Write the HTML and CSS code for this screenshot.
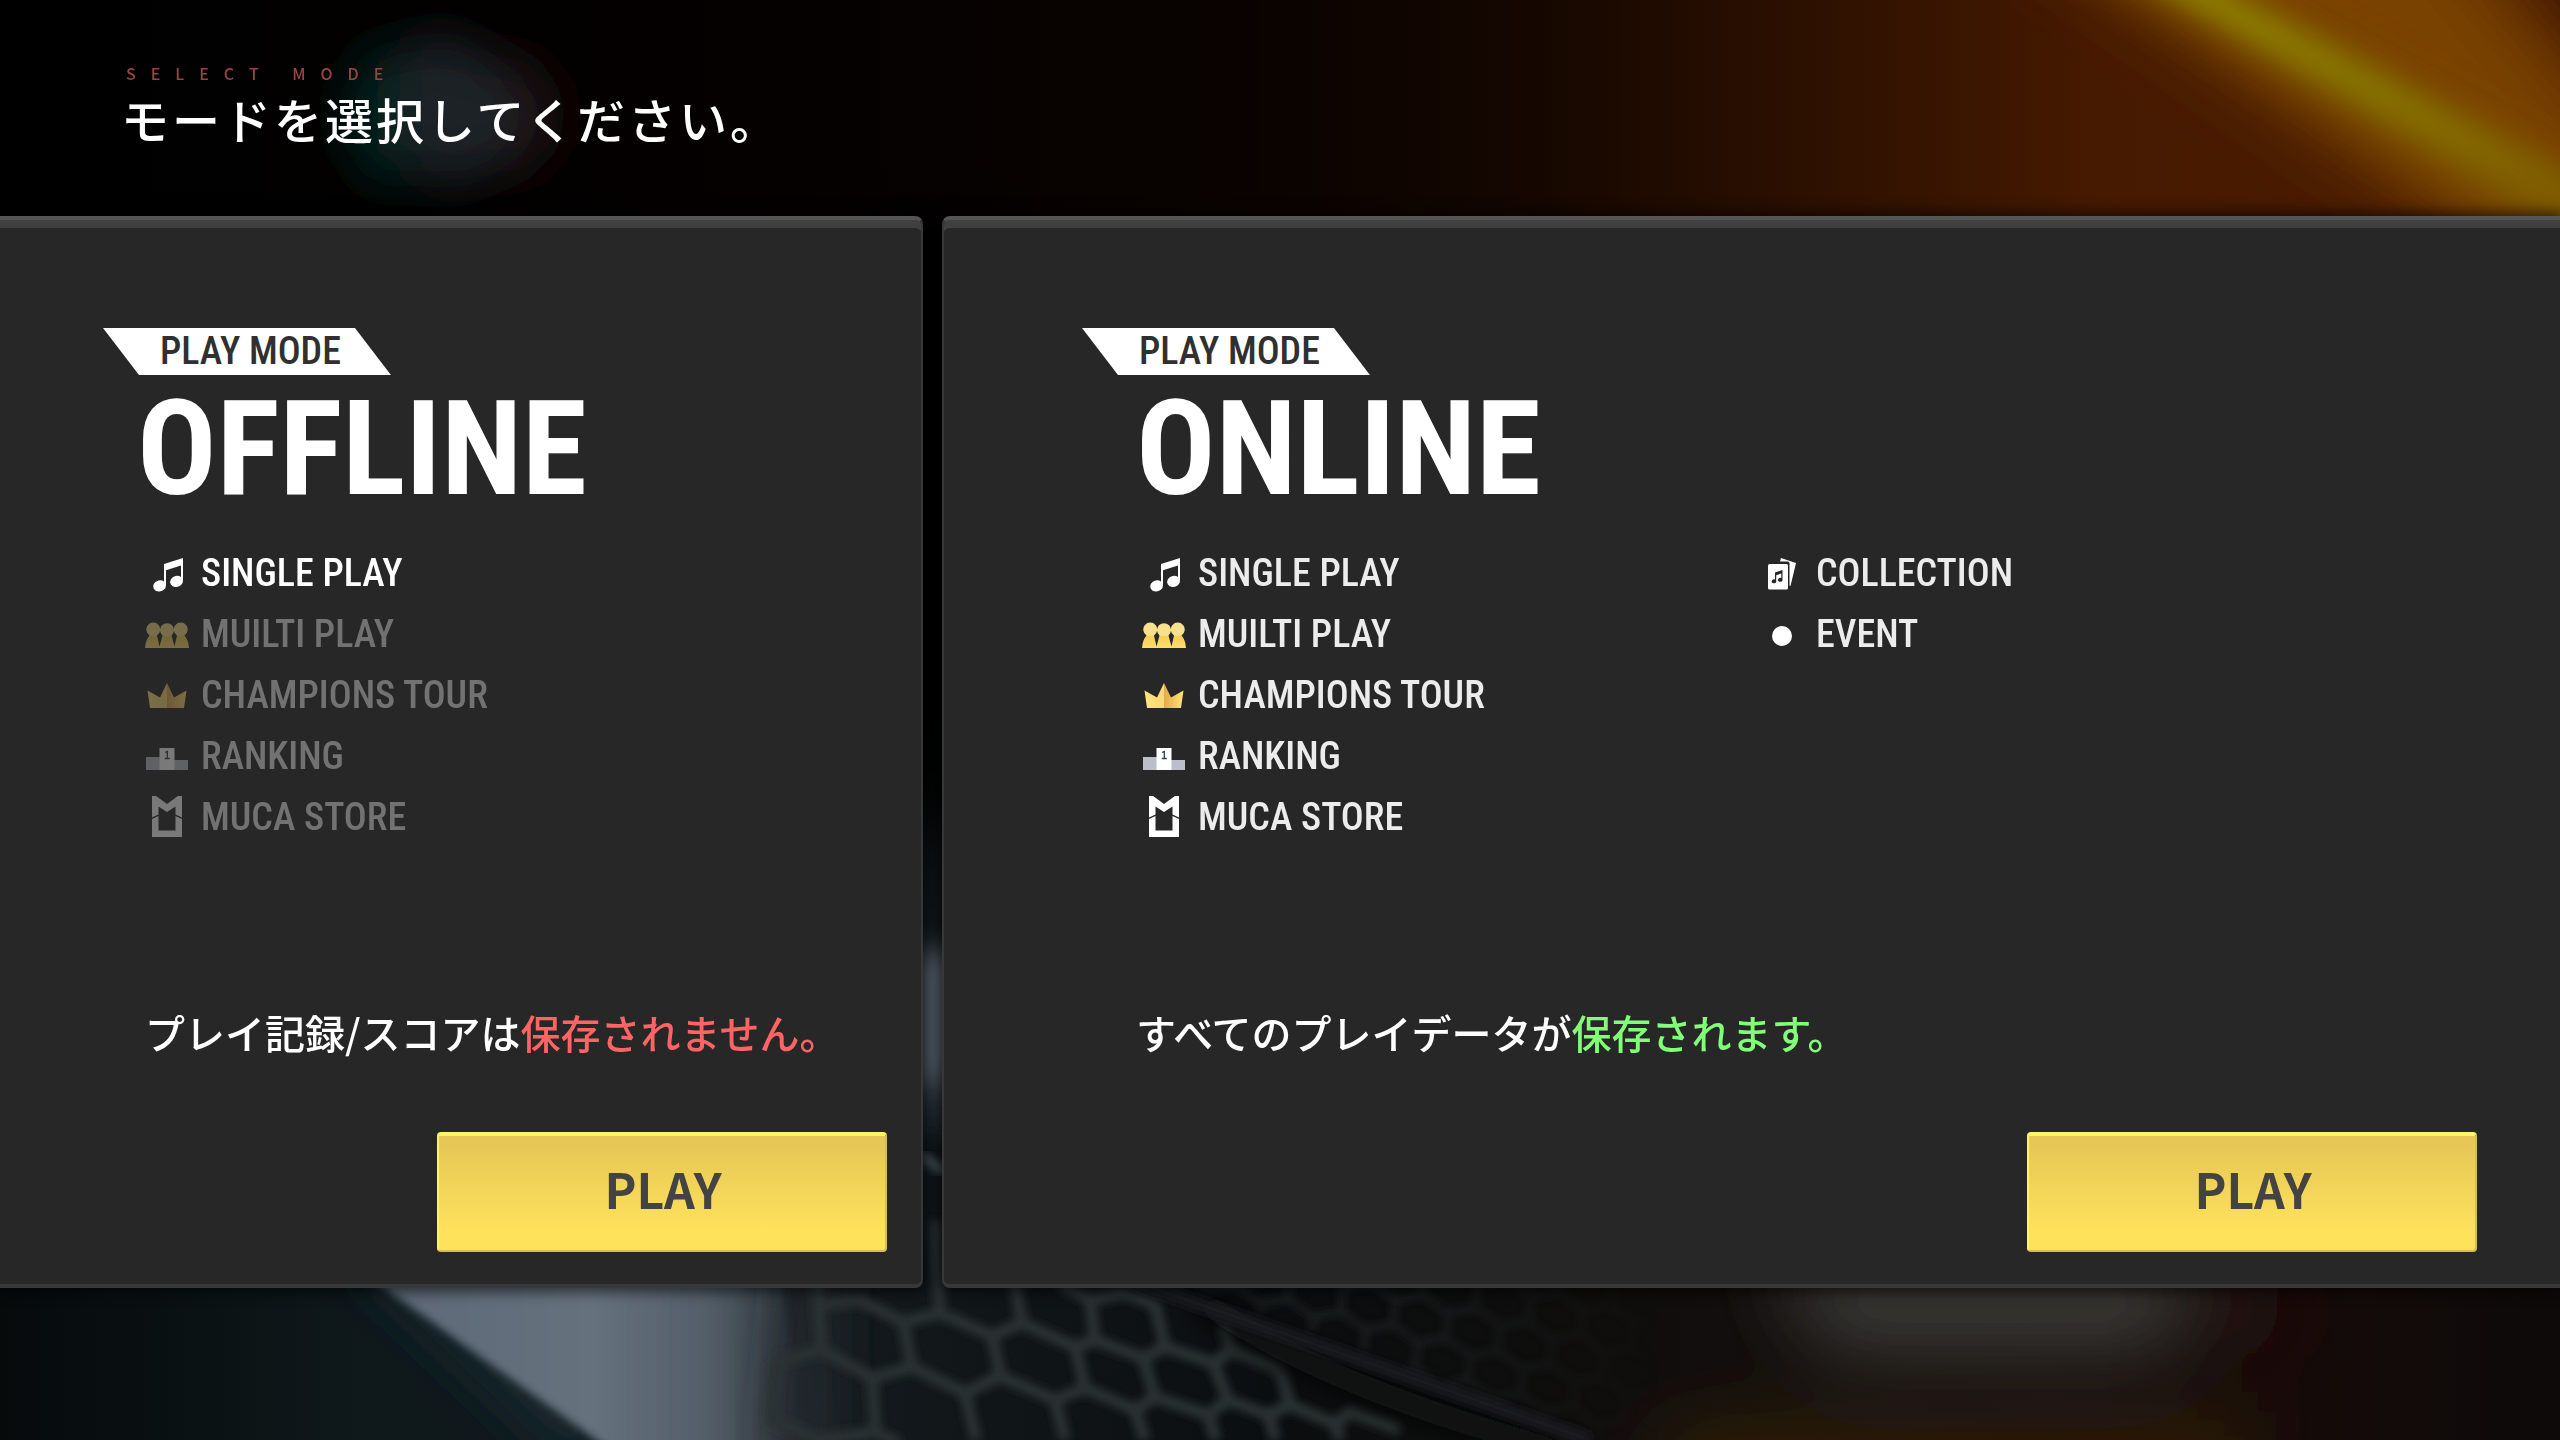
FILE: index.html
```
<!DOCTYPE html>
<html lang="ja">
<head>
<meta charset="utf-8">
<title>SELECT MODE</title>
<link rel="stylesheet" href="styles.css">
</head>
<body>
<svg class="backdrop" viewBox="0 0 2560 1440" preserveAspectRatio="xMidYMid slice" aria-hidden="true">
  <defs>
    <filter id="soft4" x="-20%" y="-20%" width="140%" height="140%"><feGaussianBlur stdDeviation="4"/></filter>
    <filter id="soft14" x="-50%" y="-50%" width="200%" height="200%"><feGaussianBlur stdDeviation="14"/></filter>
    <filter id="soft24" x="-50%" y="-50%" width="200%" height="200%"><feGaussianBlur stdDeviation="24"/></filter>
    <filter id="soft40" x="-50%" y="-50%" width="200%" height="200%"><feGaussianBlur stdDeviation="40"/></filter>
    <linearGradient id="amber" x1="0" x2="1" y1="0" y2="0">
      <stop offset="0" stop-color="#000"/><stop offset=".3" stop-color="#040100"/><stop offset=".5" stop-color="#0a0300"/><stop offset=".6" stop-color="#150700"/>
      <stop offset=".68" stop-color="#270e00"/><stop offset=".82" stop-color="#461a00"/><stop offset="1" stop-color="#4a1c00"/>
    </linearGradient>
    <linearGradient id="floor" x1="0" x2="1" y1="0" y2="0">
      <stop offset="0" stop-color="#060a0b"/><stop offset=".15" stop-color="#0f191c"/><stop offset=".35" stop-color="#12181b"/>
      <stop offset=".5" stop-color="#0b0e0f"/><stop offset=".7" stop-color="#120e0c"/><stop offset=".9" stop-color="#150b09"/><stop offset="1" stop-color="#0d0a0a"/>
    </linearGradient>
    <linearGradient id="streak" x1="2170" y1="0" x2="2560" y2="210" gradientUnits="userSpaceOnUse">
      <stop offset="0" stop-color="#938800"/><stop offset=".5" stop-color="#867404"/><stop offset="1" stop-color="#7f5c04"/>
    </linearGradient>
    <linearGradient id="sheen" x1="0" x2="1" y1="0" y2="0">
      <stop offset="0" stop-color="#5c6876"/><stop offset=".55" stop-color="#66717e"/><stop offset=".8" stop-color="#535e68"/><stop offset="1" stop-color="#2e373d"/>
    </linearGradient>
    <linearGradient id="fade" x1="1170" x2="1660" y1="0" y2="0" gradientUnits="userSpaceOnUse">
      <stop offset="0" stop-color="#fff"/><stop offset=".5" stop-color="#aaa"/><stop offset="1" stop-color="#000"/>
    </linearGradient>
    <mask id="meshFade"><rect x="1100" y="1260" width="600" height="200" fill="url(#fade)"/></mask>
    <pattern id="mesh" width="54" height="72" patternUnits="userSpaceOnUse" patternTransform="rotate(14) skewX(8)">
      <path d="M27 0v12L0 24v24l27 12v12M27 12l27 12v24L27 60" fill="none" stroke="#202527" stroke-width="6"/>
    </pattern>
  </defs>
  <rect width="2560" height="720" fill="url(#amber)"/>
  <rect y="720" width="2560" height="720" fill="url(#floor)"/>
  <rect x="860" y="216" width="140" height="620" fill="#050505" filter="url(#soft40)"/>
  <g filter="url(#soft40)">
    <path d="M1980-120 2700-120 2700 330 2560 290Z" fill="#7a4200"/>
    <path d="M2380-160 2760-160 2760 150 2600 110Z" fill="#3c1000"/>
  </g>
  <g filter="url(#soft24)">
    <path d="M2060-60 2130-60 2640 210 2640 310Z" fill="#7a5004" opacity=".8"/>
  </g>
  <g filter="url(#soft14)">
    <path d="M2096-50 2148-50 2680 232 2660 280Z" fill="url(#streak)"/>
  </g>
  <g filter="url(#soft24)">
    <ellipse cx="390" cy="115" rx="44" ry="70" fill="#06201e"/>
    <ellipse cx="515" cy="115" rx="44" ry="60" fill="#1c0a0e"/>
    <path d="M400 60 440 30 490 60 530 110 510 155 450 190 400 150Z" fill="#1d2426"/>
  </g>
  <g filter="url(#soft14)">
    <path d="M910 950H960V1090H910Z" fill="#56646c"/>
    <path d="M920 1080H960V1130H920Z" fill="#26323a"/>
  </g>
  <path d="M340 1250 420 1250 640 1460 560 1460Z" fill="#16262e" filter="url(#soft24)"/>
  <path d="M920 1155 945 1172" stroke="#45535a" stroke-width="10" filter="url(#soft4)"/>
  <path d="M640 1240H760L810 1480H700Z" fill="#3a454c" filter="url(#soft24)"/>
  <path d="M340 1256H780L800 1460H624Z" fill="url(#sheen)" filter="url(#soft4)"/>
  <path d="M790 1256H840V1460H770Z" fill="#20282c" filter="url(#soft24)"/>
  <g mask="url(#meshFade)"><path d="M1170 1280H1660V1440H1600Z" fill="url(#mesh)" filter="url(#soft4)"/></g>
  <g fill="none" stroke="#2a3033" stroke-width="12" stroke-linejoin="round" filter="url(#soft4)">
    <path d="M818 1280V1305L822 1350M818 1305 860 1300 903 1322 940 1313 992 1336 1022 1323 1075 1347 1095 1340 1143 1358 1165 1347 1213 1363 1232 1350 1280 1370"/>
    <path d="M940 1313 935 1220M1022 1323 1014 1280M1095 1340 1090 1300 1060 1284M1165 1347 1155 1305 1125 1293 1090 1300M1232 1350 1222 1325"/>
    <path d="M903 1322 912 1367M992 1336 1000 1374M1075 1347 1085 1388M1143 1358 1155 1397M1213 1363 1228 1400M1280 1370 1290 1405"/>
    <path d="M775 1362 822 1350 872 1378 912 1367 965 1393 1000 1376 1055 1400 1085 1388 1135 1410 1155 1397 1208 1415 1228 1400 1268 1415 1290 1405 1335 1424 1350 1412 1400 1430"/>
    <path d="M775 1362 772 1420 820 1440 876 1432 900 1444M872 1378 876 1432M965 1393 976 1440M1055 1400 1065 1440M1135 1410 1145 1440M1208 1415 1216 1440M1268 1415 1276 1440M1335 1424 1340 1440"/>
  </g>
  <path d="M1200 1300Q1330 1390 1560 1450" fill="none" stroke="#090c0d" stroke-width="24" filter="url(#soft14)"/>
  <path d="M1130 1280Q1330 1350 1590 1440" fill="none" stroke="#1a1f21" stroke-width="12" filter="url(#soft4)"/>
  <g filter="url(#soft40)">
    <path d="M1760 1260H2200L2170 1350H1830Z" fill="#3d3c3a"/>
    <ellipse cx="2250" cy="1310" rx="34" ry="50" fill="#260e0c"/>
    <path d="M1640 1480 1680 1436H2250V1480Z" fill="#452a0c"/>
  </g>
</svg>

<header class="page-header">
  <p class="eyebrow">SELECT MODE</p>
  <h1 class="page-title">モードを選択してください。</h1>
</header>

<svg class="symbols" aria-hidden="true">
  <defs>
    <linearGradient id="gold" x1="0" x2="0" y1="0" y2="1"><stop offset="0" stop-color="#f8e08c"/><stop offset=".5" stop-color="#f8e08c"/><stop offset=".55" stop-color="#f6cf58"/><stop offset="1" stop-color="#ffdf6c"/></linearGradient>
    <linearGradient id="crownL" x1="0" x2="1" y1="0" y2="0"><stop offset="0" stop-color="#ffe478"/><stop offset="1" stop-color="#fbd874"/></linearGradient>
    <linearGradient id="crownR" x1="0" x2="1" y1="0" y2="0"><stop offset="0" stop-color="#e6a84a"/><stop offset="1" stop-color="#ffe478"/></linearGradient>
  </defs>
  <symbol id="i-note" viewBox="0 0 44 44"><path fill="#fff" d="M19 12 38 6V28.500A6.500 5.500-15 1 1 36 25V13.500L21 18.200V33A6.500 5.500-15 1 1 19 29.500Z"/></symbol>
  <symbol id="i-multi" viewBox="0 0 44 44"><g fill="url(#gold)"><path d="M4.500 22.500A7 7 0 1 1 12 22.500L14.500 33.500 17.500 22.500A7 7 0 1 1 26.500 22.500L29.500 33.500 32 22.500A7 7 0 1 1 39.500 22.500Q43.500 27 44 35H0Q.5 27 4.500 22.500Z"/></g></symbol>
  <symbol id="i-crown" viewBox="0 0 44 44"><path fill="url(#crownL)" d="M2.500 16.500 15 23.500 22 9V34H5Z"/><path fill="url(#crownR)" d="M41.500 16.500 29 23.500 22 9V34H39Z"/></symbol>
  <symbol id="i-rank" viewBox="0 0 44 44"><path fill="#bcbfca" d="M1 22H15V35H1ZM29 25H43V35H29Z"/><path fill="#fff" d="M14.500 13H29.500V35H14.500Z"/><path fill="none" stroke="#2d4354" stroke-width="1.300" d="M20 17.500 22.300 16.500V23.500M19.800 23.500H24.800"/></symbol>
  <symbol id="i-muca" viewBox="0 0 44 44" overflow="visible"><path fill="#fff" d="M7-3 22 8 37-3V21.500L30.500 18.500V10.500L22 16 13.500 10.500V18.500L7 21.500ZM7 23 13.500 20V34.500H30.500V20L37 23V41H7Z"/></symbol>
  <symbol id="i-cards" viewBox="0 0 44 44"><path fill="#fff" d="M21 6 36 11 30.500 34 29.500 33.500V11.500Q29.500 9.500 27.500 9.500H20Z"/><rect x="8" y="12" width="20" height="25.500" rx="1.500" fill="#fff"/><path fill="#262626" d="M15 20.500 22.500 18V27.500A2.300 2-15 1 1 21.300 26V21.500L16.200 23.200V29A2.300 2-15 1 1 15 27.500Z"/></symbol>
  <symbol id="i-dot" viewBox="0 0 44 44"><circle cx="22" cy="23" r="10" fill="#fff"/></symbol>
</svg>

<main class="modes">
  <section class="panel panel-offline" aria-labelledby="offline">
    <p class="badge">PLAY MODE</p>
    <h2 class="mode-name" id="offline">OFFLINE</h2>
    <div class="features">
      <ul class="feature-list">
        <li class="feature is-active"><svg class="icon"><use href="#i-note"/></svg>SINGLE PLAY</li>
        <li class="feature is-disabled"><svg class="icon"><use href="#i-multi"/></svg>MUILTI PLAY</li>
        <li class="feature is-disabled"><svg class="icon"><use href="#i-crown"/></svg>CHAMPIONS TOUR</li>
        <li class="feature is-disabled"><svg class="icon"><use href="#i-rank"/></svg>RANKING</li>
        <li class="feature is-disabled"><svg class="icon"><use href="#i-muca"/></svg>MUCA STORE</li>
      </ul>
    </div>
    <p class="notice">プレイ記録/スコアは<span class="warn">保存されません。</span></p>
    <button class="play" type="button">PLAY</button>
  </section>

  <section class="panel panel-online" aria-labelledby="online">
    <p class="badge">PLAY MODE</p>
    <h2 class="mode-name" id="online">ONLINE</h2>
    <div class="features">
      <ul class="feature-list">
        <li class="feature"><svg class="icon"><use href="#i-note"/></svg>SINGLE PLAY</li>
        <li class="feature"><svg class="icon"><use href="#i-multi"/></svg>MUILTI PLAY</li>
        <li class="feature"><svg class="icon"><use href="#i-crown"/></svg>CHAMPIONS TOUR</li>
        <li class="feature"><svg class="icon"><use href="#i-rank"/></svg>RANKING</li>
        <li class="feature"><svg class="icon"><use href="#i-muca"/></svg>MUCA STORE</li>
      </ul>
      <ul class="feature-list">
        <li class="feature"><svg class="icon"><use href="#i-cards"/></svg>COLLECTION</li>
        <li class="feature"><svg class="icon"><use href="#i-dot"/></svg>EVENT</li>
      </ul>
    </div>
    <p class="notice">すべてのプレイデータが<span class="ok">保存されます。</span></p>
    <button class="play" type="button">PLAY</button>
  </section>
</main>
</body>
</html>
```
FILE: styles.css
```
* { box-sizing: border-box; margin: 0; padding: 0; }

:root {
  --display: "Roboto Condensed", Roboto, sans-serif;
  --text: "Noto Sans CJK JP", "Noto Sans", sans-serif;
}

body {
  min-height: 100vh;
  background: #000;
  color: #fff;
  font-family: var(--text);
  overflow-x: hidden;
}

.backdrop {
  position: fixed;
  inset: 0;
  z-index: -1;
  width: 100%;
  height: 100%;
}

.symbols { display: block; width: 0; height: 0; }

.page-header { padding: 59px 121px 67px; }

.eyebrow {
  padding-left: 5px;
  color: #984444;
  font-size: 16px;
  font-weight: 500;
  line-height: 28px;
  letter-spacing: 15px;
}

.page-title {
  font-size: 48px;
  font-weight: 500;
  line-height: 62px;
  letter-spacing: 3px;
}

.modes {
  display: grid;
  grid-template-columns: 923fr 1618fr;
  gap: 19px;
}

.panel {
  display: flex;
  flex-direction: column;
  padding: 108px 34px 32px 103px;
  background: #272727;
  border-top: 4px solid #555;
  border-bottom: 4px solid #383838;
  box-shadow: inset 0 8px #404040, 0 0 14px 4px rgba(0, 0, 0, .6);
}

.panel-offline {
  --inset: 34px;
  --content-inset: 42px;
  border-right: 2px solid #383838;
  border-radius: 0 8px 8px 0;
}

.panel-online {
  --inset: 54px;
  --content-inset: 60px;
  padding-right: 83px;
  padding-left: 138px;
  border-left: 2px solid #383838;
  border-radius: 8px 0 0 8px;
}

.badge {
  align-self: flex-start;
  padding: 0 50px 0 57px;
  background: #fff;
  clip-path: polygon(0 0, calc(100% - 36px) 0, 100% 100%, 36px 100%);
  color: #303030;
  font: 500 38px/47px var(--display);
}

.mode-name {
  margin: 8px 0 28px;
  padding-left: var(--inset);
  font: 700 132px/132px var(--display);
}

.features {
  display: flex;
  min-height: 305px;
  padding-left: var(--content-inset);
}

.feature-list {
  list-style: none;
  min-width: 618px;
}

.feature {
  display: flex;
  align-items: center;
  gap: 12px;
  height: 61px;
  font: 500 38px/61px var(--display);
  color: #ececec;
}

.is-active { color: #fff; }
.is-disabled { opacity: .38; }

.icon { width: 44px; height: 44px; }

.notice {
  margin: 154px 0 70px;
  padding-left: var(--content-inset);
  font-size: 40px;
  font-weight: 500;
  line-height: 60px;
}

.panel-online .notice { padding-left: var(--inset); }

.warn { color: #ff6464; }
.ok { color: #82ff78; }

.play {
  align-self: flex-end;
  width: 450px;
  height: 120px;
  padding: 0 0 10px 2px;
  border: 2px solid #d8bd50;
  border-top: 4px solid #fff462;
  border-left-color: #fff462;
  border-radius: 4px;
  background: linear-gradient(#e7c856 10%, #ffe25c 85%);
  color: #434343;
  font: 700 48px/72px var(--text);
}
```
